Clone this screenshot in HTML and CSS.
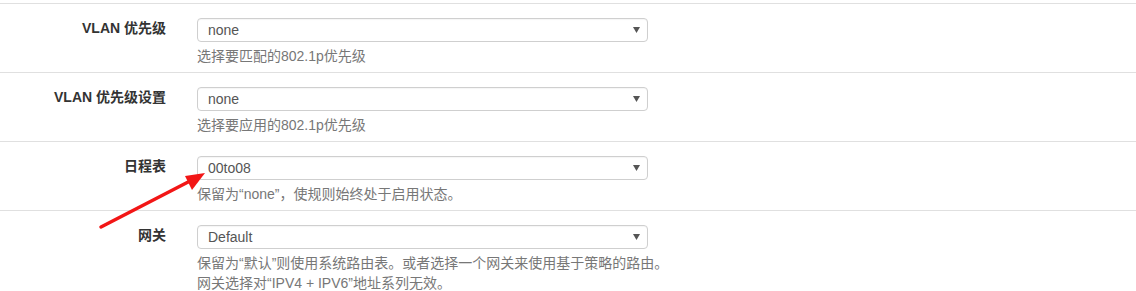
FILE: index.html
```html
<!DOCTYPE html>
<html lang="zh-CN">
<head>
<meta charset="utf-8">
<title>规则设置</title>
<link rel="stylesheet" href="styles.css">
</head>
<body>
<div class="panel">
  <div class="row">
    <label class="label">VLAN 优先级</label>
    <div class="control">
      <div class="select"><span class="value">none</span><svg class="caret" width="7" height="6" viewBox="0 0 7 6"><path d="M0 0H7L3.5 6Z"/></svg></div>
      <div class="help">选择要匹配的802.1p优先级</div>
    </div>
  </div>
  <div class="row">
    <label class="label">VLAN 优先级设置</label>
    <div class="control">
      <div class="select"><span class="value">none</span><svg class="caret" width="7" height="6" viewBox="0 0 7 6"><path d="M0 0H7L3.5 6Z"/></svg></div>
      <div class="help">选择要应用的802.1p优先级</div>
    </div>
  </div>
  <div class="row">
    <label class="label">日程表</label>
    <div class="control">
      <div class="select"><span class="value">00to08</span><svg class="caret" width="7" height="6" viewBox="0 0 7 6"><path d="M0 0H7L3.5 6Z"/></svg></div>
      <div class="help">保留为“none”，使规则始终处于启用状态。</div>
    </div>
  </div>
  <div class="row">
    <label class="label">网关</label>
    <div class="control">
      <div class="select"><span class="value">Default</span><svg class="caret" width="7" height="6" viewBox="0 0 7 6"><path d="M0 0H7L3.5 6Z"/></svg></div>
      <div class="help">保留为“默认”则使用系统路由表。或者选择一个网关来使用基于策略的路由。<br>网关选择对“IPV4 + IPV6”地址系列无效。</div>
    </div>
  </div>
  <svg class="annotation" width="1136" height="291" viewBox="0 0 1136 291">
    <line x1="101" y1="227" x2="192" y2="180" stroke="#f21616" stroke-width="3.5" stroke-linecap="round"/>
    <polygon points="185,176 205,173 192,190" fill="#f21616"/>
  </svg>
</div>
</body>
</html>
```
FILE: styles.css
```css
html, body {
  margin: 0;
  padding: 0;
  background: #fff;
}
body {
  font-family: "Liberation Sans", "Noto Sans CJK SC", sans-serif;
  font-size: 14px;
  color: #333;
}
.panel {
  position: relative;
  padding-top: 3px;
}
.row {
  display: grid;
  grid-template-columns: 166px 1fr;
  column-gap: 31px;
  border-top: 1px solid #e0e0e0;
  padding: 14px 0 6px;
}
.label {
  text-align: right;
  font-weight: bold;
  line-height: 20px;
  color: #333;
  white-space: nowrap;
}
.control {
  display: flex;
  flex-direction: column;
  gap: 4px;
}
.select {
  position: relative;
  box-sizing: border-box;
  width: 451px;
  height: 24px;
  border: 1px solid #cfcfcf;
  border-radius: 4px;
  padding: 0 10px;
  line-height: 22px;
  color: #555;
  box-shadow: inset 0 1px 1px rgba(0,0,0,0.04);
}
.caret {
  position: absolute;
  right: 7px;
  top: 8px;
  fill: #555;
}
.help {
  line-height: 20px;
  color: #777;
  white-space: nowrap;
}
.annotation {
  position: absolute;
  left: 0;
  top: 0;
  pointer-events: none;
}
```
